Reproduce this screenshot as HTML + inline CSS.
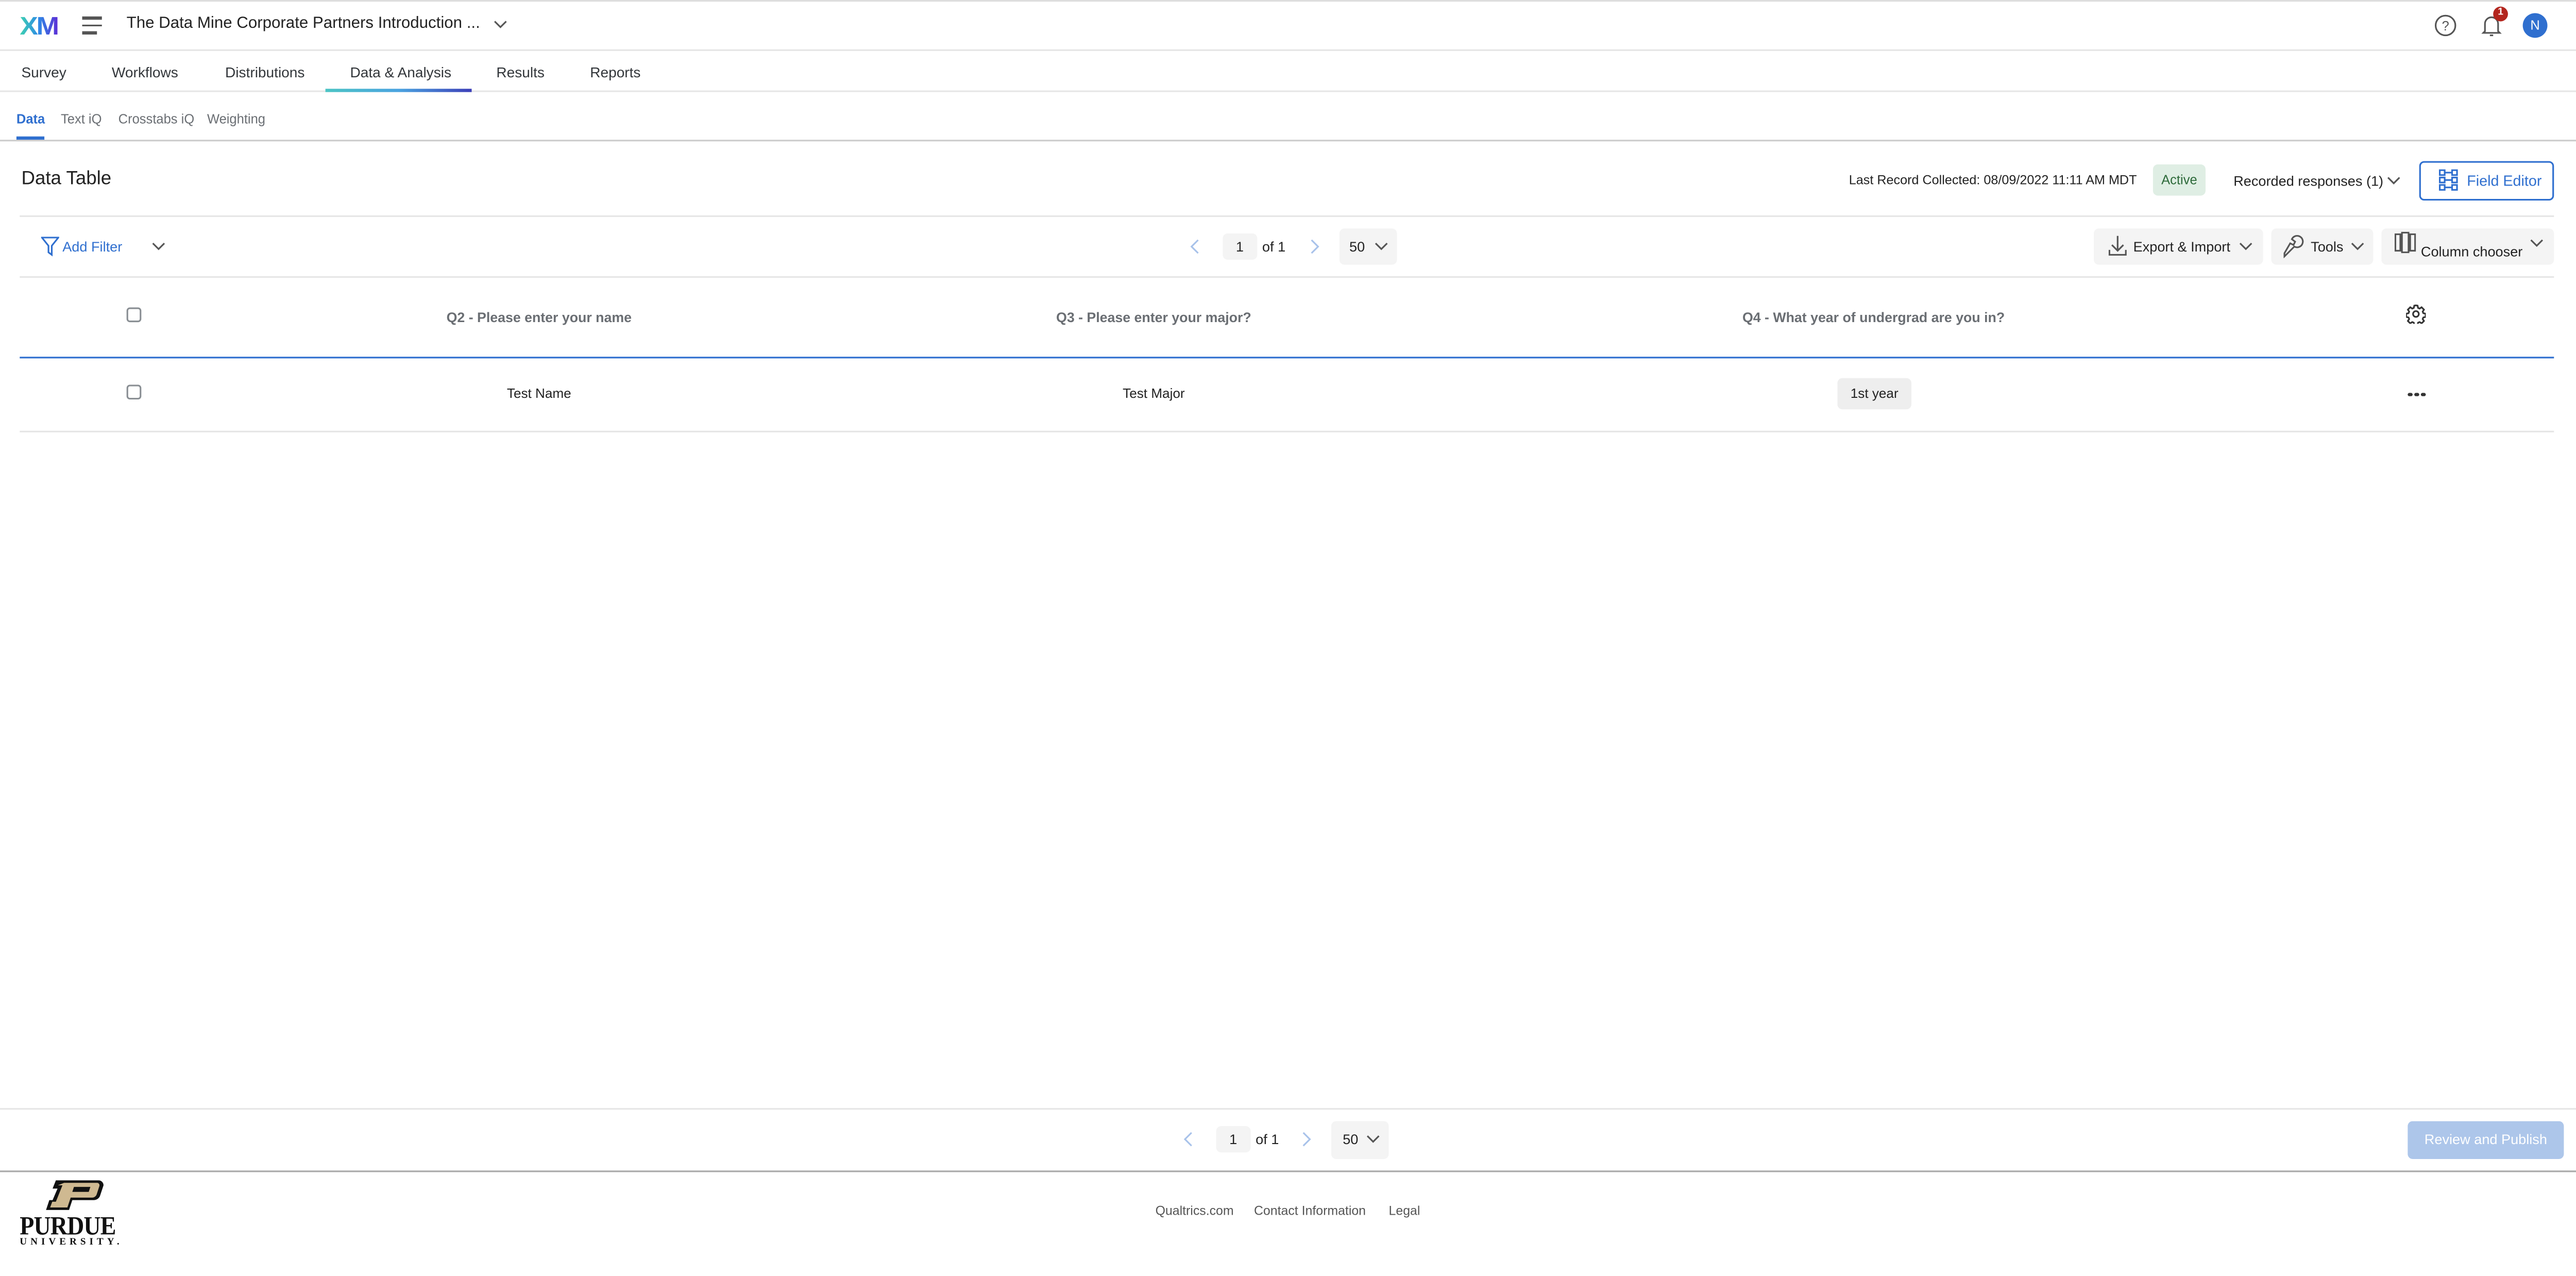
<!DOCTYPE html>
<html><head><meta charset="utf-8"><style>
*{margin:0;padding:0;box-sizing:border-box}
html,body{width:5112px;height:2476px;overflow:hidden;background:#fff}
#w{position:absolute;left:0;top:0;width:1568px;height:760px;transform:scale(3.19);transform-origin:0 0;font-family:"Liberation Sans",sans-serif;color:#32363a}
.a{position:absolute;white-space:nowrap}
.hl{position:absolute;height:1px;background:#e6e6e6}
.btn{position:absolute;background:#f4f4f4;border-radius:3px}
.c{transform:translateX(-50%)}
.chk{position:absolute;width:9px;height:9px;border:1px solid #8a8f94;border-radius:2px;background:#fff}
</style></head><body><div id="w">
<div class="hl" style="left:0;top:0;width:1568px;background:#ddd"></div>
<svg class="a" style="left:12px;top:8px" width="24" height="14" viewBox="0 0 24 14"><defs><linearGradient id="g" x1="0" x2="1"><stop offset="0" stop-color="#3ed2b0"/><stop offset=".5" stop-color="#2e8ae6"/><stop offset="1" stop-color="#5b2fd6"/></linearGradient></defs><text x="0" y="13" font-family="Liberation Sans" font-weight="bold" font-size="15.5" fill="url(#g)" textLength="23" lengthAdjust="spacingAndGlyphs" letter-spacing="-1">XM</text></svg>
<div class="a" style="left:50px;top:10px;width:12px;height:1.5px;background:#555"></div>
<div class="a" style="left:50px;top:14.5px;width:12px;height:1.5px;background:#555"></div>
<div class="a" style="left:50px;top:19px;width:9px;height:1.5px;background:#555"></div>
<div class="a" style="left:77px;top:9px;font-size:9.8px;color:#222">The Data Mine Corporate Partners Introduction ...</div>
<svg class="a" style="left:300px;top:12px" width="9" height="6"><path d="M1 1l3.5 3.5L8 1" stroke="#555" fill="none"/></svg>
<svg class="a" style="left:1481px;top:8px" width="14" height="15"><circle cx="7" cy="7.5" r="6" stroke="#555" fill="none"/><text x="7" y="10.5" font-size="8" text-anchor="middle" fill="#555" font-family="Liberation Sans">?</text></svg>
<svg class="a" style="left:1509px;top:8px" width="14" height="15"><path d="M3 11V6.5a4 4 0 0 1 8 0V11l1 1H2z" stroke="#555" fill="none"/><path d="M6 13.5h2" stroke="#555"/></svg>
<div class="a" style="left:1517px;top:4px;width:9px;height:9px;border-radius:50%;background:#b3261e;color:#fff;font-size:6px;text-align:center;line-height:9px;font-weight:bold">1</div>
<div class="a" style="left:1535px;top:8px;width:15px;height:15px;border-radius:50%;background:#2f6fcf;color:#fff;font-size:8px;text-align:center;line-height:15px">N</div>
<div class="hl" style="left:0;top:30px;width:1568px"></div>
<div class="a" style="left:13px;top:38.5px;font-size:8.8px">Survey</div>
<div class="a" style="left:68px;top:38.5px;font-size:8.8px">Workflows</div>
<div class="a" style="left:137px;top:38.5px;font-size:8.8px">Distributions</div>
<div class="a" style="left:213px;top:38.5px;font-size:8.8px">Data &amp; Analysis</div>
<div class="a" style="left:302px;top:38.5px;font-size:8.8px">Results</div>
<div class="a" style="left:359px;top:38.5px;font-size:8.8px">Reports</div>
<div class="hl" style="left:0;top:55px;width:1568px"></div>
<div class="a" style="left:198px;top:54px;width:89px;height:2px;background:linear-gradient(90deg,#4bc4c4,#4aa3e0 50%,#3c3fb8)"></div>
<div class="a" style="left:10px;top:67.5px;font-size:8px;color:#2f6fcf;font-weight:bold">Data</div>
<div class="a" style="left:37px;top:67.5px;font-size:8px;color:#6a6e73">Text iQ</div>
<div class="a" style="left:72px;top:67.5px;font-size:8px;color:#6a6e73">Crosstabs iQ</div>
<div class="a" style="left:126px;top:67.5px;font-size:8px;color:#6a6e73">Weighting</div>
<div class="a" style="left:10px;top:83px;width:17px;height:2px;background:#2f6fcf"></div>
<div class="hl" style="left:0;top:85px;width:1568px;background:#ccc"></div>
<div class="a" style="left:13px;top:103px;font-size:11.5px;color:#222">Data Table</div>
<div class="a" style="left:1125px;top:105px;font-size:7.9px;color:#222">Last Record Collected: 08/09/2022 11:11 AM MDT</div>
<div class="a" style="left:1310px;top:100px;width:32px;height:19px;background:#dfeee4;border-radius:3px;font-size:8px;color:#2d6a3a;text-align:center;line-height:19px">Active</div>
<div class="a" style="left:1359px;top:105px;font-size:8.5px;color:#222">Recorded responses (1)</div>
<svg class="a" style="left:1452px;top:107px" width="9" height="6"><path d="M1 1l3.5 3.5L8 1" stroke="#555" fill="none"/></svg>
<div class="a" style="left:1472px;top:98px;width:82px;height:24px;border:1px solid #2f6fcf;border-radius:3px"></div>
<svg class="a" style="left:1484px;top:103px" width="12" height="13"><g stroke="#2f6fcf" fill="none" stroke-width="1"><rect x="0.5" y="0.5" width="3" height="3"/><rect x="8" y="0.5" width="3" height="3"/><rect x="0.5" y="5" width="3" height="3"/><rect x="8" y="5" width="3" height="3"/><rect x="0.5" y="9.5" width="3" height="3"/><rect x="8" y="9.5" width="3" height="3"/><path d="M3.5 2h4.5M3.5 6.5h4.5M3.5 11h4.5"/></g></svg>
<div class="a" style="left:1501px;top:104.5px;font-size:9px;color:#2f6fcf">Field Editor</div>
<div class="hl" style="left:12px;top:131px;width:1542px"></div>
<svg class="a" style="left:25px;top:144px" width="11" height="12"><path d="M0.5 0.5h10L6.5 5.5V11L4.5 9.5v-4z" stroke="#2f6fcf" fill="none"/></svg>
<div class="a" style="left:38px;top:145px;font-size:8.5px;color:#2f6fcf">Add Filter</div>
<svg class="a" style="left:92px;top:147px" width="9" height="6"><path d="M1 1l3.5 3.5L8 1" stroke="#555" fill="none"/></svg>
<svg class="a" style="left:724px;top:145px" width="6" height="10"><path d="M5 1L1 5l4 4" stroke="#a8c2ea" fill="none"/></svg>
<div class="btn" style="left:744px;top:142px;width:21px;height:16px"></div>
<div class="a" style="left:752px;top:145px;font-size:8.5px;color:#222">1</div>
<div class="a" style="left:768px;top:145px;font-size:8.5px;color:#222">of 1</div>
<svg class="a" style="left:797px;top:145px" width="6" height="10"><path d="M1 1l4 4-4 4" stroke="#a8c2ea" fill="none"/></svg>
<div class="btn" style="left:815px;top:139px;width:35px;height:22px"></div>
<div class="a" style="left:821px;top:145px;font-size:8.5px;color:#222">50</div>
<svg class="a" style="left:836px;top:147px" width="9" height="6"><path d="M1 1l3.5 3.5L8 1" stroke="#555" fill="none"/></svg>
<div class="btn" style="left:1274px;top:139px;width:103px;height:22px"></div>
<svg class="a" style="left:1283px;top:143px" width="11" height="13"><path d="M5.5 0.5v9M2 6l3.5 3.5L9 6M0.5 9v3h10V9" stroke="#555" fill="none"/></svg>
<div class="a" style="left:1298px;top:145px;font-size:8.5px;color:#222">Export &amp; Import</div>
<svg class="a" style="left:1362px;top:147px" width="9" height="6"><path d="M1 1l3.5 3.5L8 1" stroke="#555" fill="none"/></svg>
<div class="btn" style="left:1382px;top:139px;width:62px;height:22px"></div>
<svg class="a" style="left:1389px;top:143px" width="13" height="14"><path d="M1 13l6-6a3.5 3.5 0 1 0 -1.5-4.5l2 1.5-1 2-2-1L1 11z" stroke="#555" fill="none"/></svg>
<div class="a" style="left:1406px;top:145px;font-size:8.5px;color:#222">Tools</div>
<svg class="a" style="left:1430px;top:147px" width="9" height="6"><path d="M1 1l3.5 3.5L8 1" stroke="#555" fill="none"/></svg>
<div class="btn" style="left:1449px;top:139px;width:105px;height:22px"></div>
<svg class="a" style="left:1457px;top:141px" width="13" height="13"><path d="M0.5 1.5h3v10h-3zM4.5 0.5h4v12h-4zM9.5 1.5h3v10h-3z" stroke="#555" fill="none"/></svg>
<div class="a" style="left:1473px;top:147.5px;font-size:8.5px;color:#222">Column chooser</div>
<svg class="a" style="left:1539px;top:145px" width="9" height="6"><path d="M1 1l3.5 3.5L8 1" stroke="#555" fill="none"/></svg>
<div class="hl" style="left:12px;top:168px;width:1542px"></div>
<div class="chk" style="left:77px;top:187px"></div>
<div class="a c" style="left:328px;top:188px;font-size:8.4px;color:#6a6e73;font-weight:bold">Q2 - Please enter your name</div>
<div class="a c" style="left:702px;top:188px;font-size:8.4px;color:#6a6e73;font-weight:bold">Q3 - Please enter your major?</div>
<div class="a c" style="left:1140px;top:188px;font-size:8.4px;color:#6a6e73;font-weight:bold">Q4 - What year of undergrad are you in?</div>
<svg class="a" style="left:1464px;top:185px" width="12" height="12" viewBox="0 0 24 24"><path d="M12 1.5l2 .3.6 2.8 1.9.8 2.4-1.6 2.9 2.9-1.6 2.4.8 1.9 2.8.6v4l-2.8.6-.8 1.9 1.6 2.4-2.9 2.9-2.4-1.6-1.9.8-.6 2.8h-4l-.6-2.8-1.9-.8-2.4 1.6-2.9-2.9 1.6-2.4-.8-1.9-2.8-.6v-4l2.8-.6.8-1.9-1.6-2.4 2.9-2.9 2.4 1.6 1.9-.8.6-2.8z" stroke="#333" stroke-width="2" fill="none"/><circle cx="12" cy="12" r="3.5" stroke="#333" stroke-width="2" fill="none"/></svg>
<div class="a" style="left:12px;top:216.5px;width:1542px;height:1.5px;background:#2f6fcf"></div>
<div class="chk" style="left:77px;top:234px"></div>
<div class="a c" style="left:328px;top:235px;font-size:8.2px;color:#222">Test Name</div>
<div class="a c" style="left:702px;top:235px;font-size:8.2px;color:#222">Test Major</div>
<div class="a" style="left:1118px;top:230px;width:45px;height:19px;background:#eee;border-radius:3px;font-size:8.2px;color:#222;text-align:center;line-height:19px">1st year</div>
<div class="a" style="left:1465px;top:238.5px;width:2.5px;height:2.5px;border-radius:50%;background:#333;box-shadow:4px 0 #333,8px 0 #333"></div>
<div class="hl" style="left:12px;top:262px;width:1542px"></div>
<div class="hl" style="left:0;top:674px;width:1568px"></div>
<svg class="a" style="left:720px;top:688px" width="6" height="10"><path d="M5 1L1 5l4 4" stroke="#a8c2ea" fill="none"/></svg>
<div class="btn" style="left:740px;top:685px;width:21px;height:16px"></div>
<div class="a" style="left:748px;top:688px;font-size:8.5px;color:#222">1</div>
<div class="a" style="left:764px;top:688px;font-size:8.5px;color:#222">of 1</div>
<svg class="a" style="left:792px;top:688px" width="6" height="10"><path d="M1 1l4 4-4 4" stroke="#a8c2ea" fill="none"/></svg>
<div class="btn" style="left:810px;top:682px;width:35px;height:23px"></div>
<div class="a" style="left:817px;top:688px;font-size:8.5px;color:#222">50</div>
<svg class="a" style="left:831px;top:690px" width="9" height="6"><path d="M1 1l3.5 3.5L8 1" stroke="#555" fill="none"/></svg>
<div class="a" style="left:1465px;top:682px;width:95px;height:23px;background:#adc6ea;border-radius:3px;color:#fff;font-size:8.5px;text-align:center;line-height:23px">Review and Publish</div>
<div class="hl" style="left:0;top:712px;width:1568px;background:#aaa"></div>
<svg class="a" style="left:26px;top:717px" width="38" height="20" viewBox="0 0 38 20"><path d="M12 1h22a3 3 0 0 1 3 3l-2 6a4 4 0 0 1-4 3H18l-2 6H2l2-6h2l3-7H6l2-5z" fill="#111"/><path d="M13 2.5h20a1.5 1.5 0 0 1 1.5 1.8l-1.6 5a3 3 0 0 1-2.8 2.2H17l-2 6H4.5l1.3-3.5H8l4-10H9.2z" fill="#cfb991"/><path d="M19 5h10l-1 3H18z" fill="#111"/></svg>
<div class="a" style="left:12px;top:738px;font-family:'Liberation Serif',serif;font-weight:bold;font-size:16px;color:#111;letter-spacing:-0.3px;transform:scaleX(0.9);transform-origin:0 0">PURDUE</div>
<div class="a" style="left:12px;top:753px;font-family:'Liberation Serif',serif;font-weight:bold;font-size:6px;color:#111;letter-spacing:2.2px">UNIVERSITY.</div>
<div class="a" style="left:703px;top:732px;font-size:7.8px;color:#555">Qualtrics.com</div>
<div class="a" style="left:763px;top:732px;font-size:7.8px;color:#555">Contact Information</div>
<div class="a" style="left:845px;top:732px;font-size:7.8px;color:#555">Legal</div>
</div></body></html>
